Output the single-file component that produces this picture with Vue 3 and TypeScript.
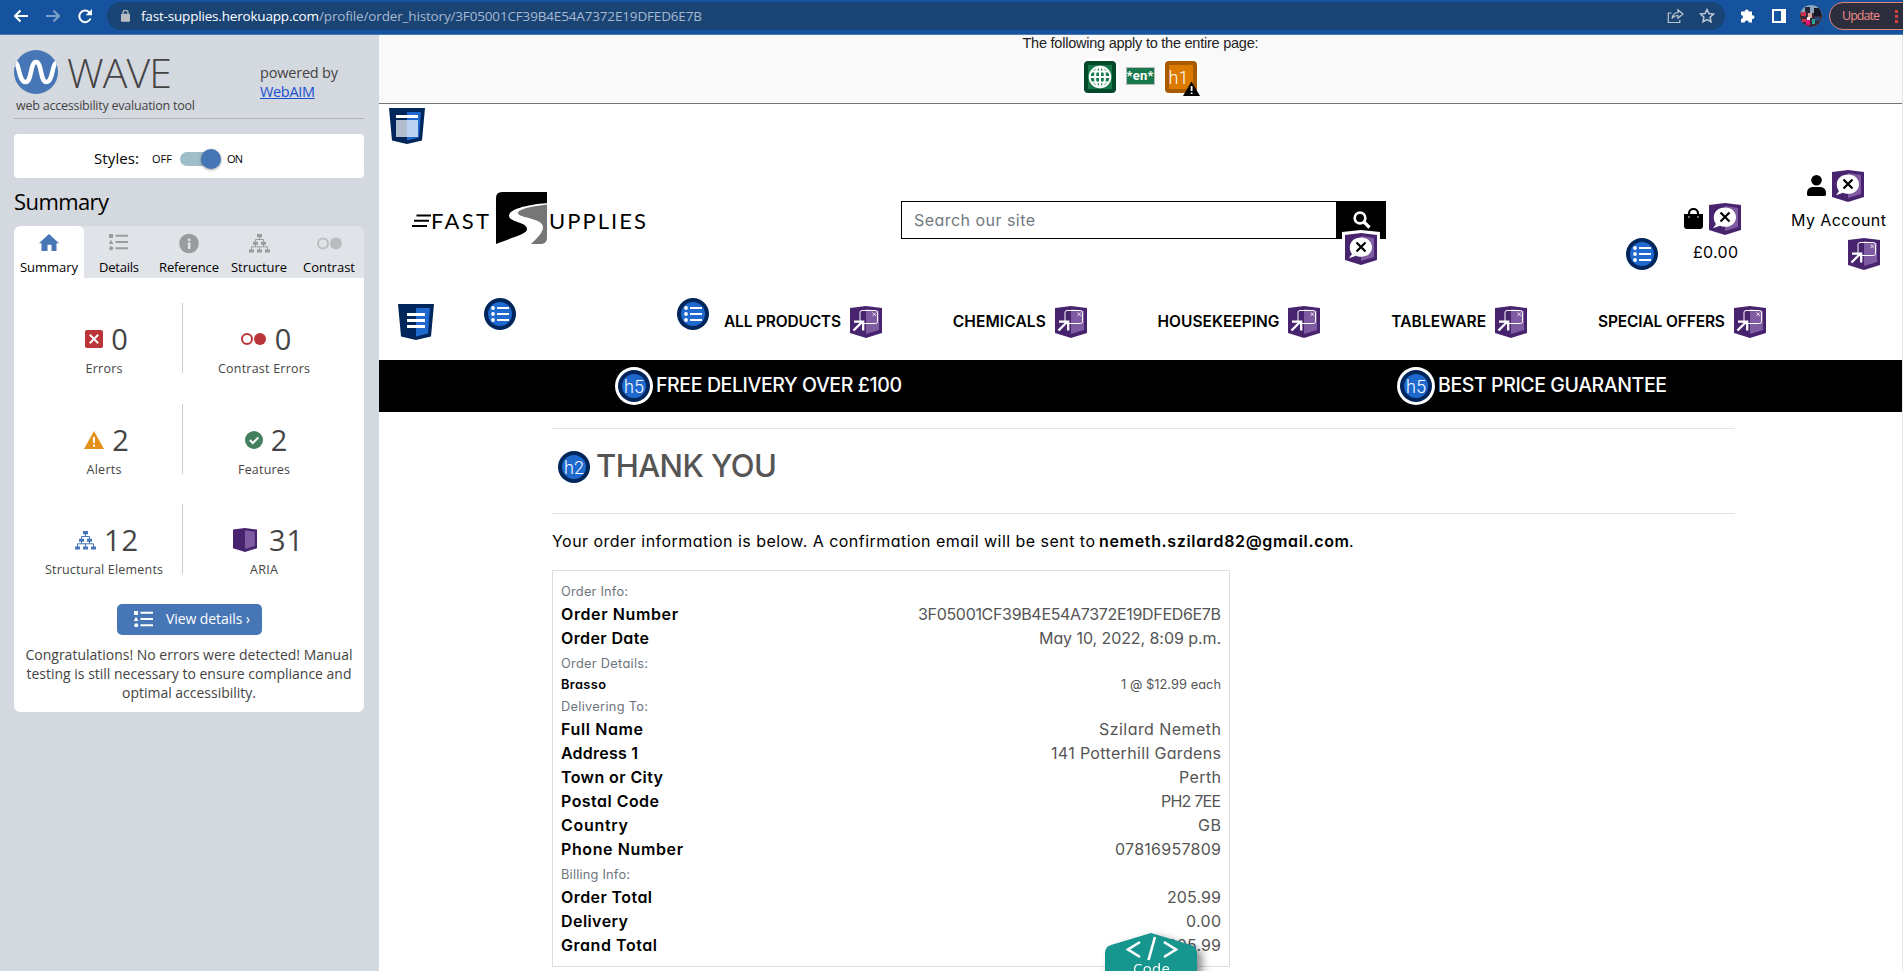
<script setup lang="ts">
interface Tab { label: string; icon: string; width: number; iconWidth: number; active?: boolean }
interface Stat { count: string; label: string; icon: string; iconWidth: number; gap: number; width: number; numWidth: number }
interface Row { kind: 'head' | 'row' | 'small'; label: string; width: number; value?: string; valueWidth?: number }

/* Spreads the letters of an element so that its text takes the given width. */
const vFit = {
  mounted(el: HTMLElement, binding: { value: number }) {
    const natural = el.getBoundingClientRect().width
    const gaps = Math.max((el.textContent ?? '').length - 1, 1)
    const spacing = (binding.value - natural) / gaps
    el.style.letterSpacing = `${spacing}px`
    el.style.marginRight = `${-spacing}px`
  },
}

const tabs: Tab[] = [
  { label: 'Summary', icon: 'home', width: 58, iconWidth: 20, active: true },
  { label: 'Details', icon: 'details', width: 40, iconWidth: 20 },
  { label: 'Reference', icon: 'info', width: 60, iconWidth: 20 },
  { label: 'Structure', icon: 'tree', width: 56, iconWidth: 21 },
  { label: 'Contrast', icon: 'contrast', width: 52, iconWidth: 25 },
]

const stats: Stat[][] = [
  [
    { count: '0', label: 'Errors', icon: 'error', iconWidth: 18, gap: 8, width: 37, numWidth: 17 },
    { count: '0', label: 'Contrast Errors', icon: 'contrast-red', iconWidth: 25, gap: 9, width: 92, numWidth: 17 },
  ],
  [
    { count: '2', label: 'Alerts', icon: 'alert', iconWidth: 20, gap: 8, width: 35, numWidth: 17 },
    { count: '2', label: 'Features', icon: 'check', iconWidth: 18, gap: 8, width: 52, numWidth: 17 },
  ],
  [
    { count: '12', label: 'Structural Elements', icon: 'tree', iconWidth: 21, gap: 8, width: 118, numWidth: 34 },
    { count: '31', label: 'ARIA', icon: 'cube', iconWidth: 24, gap: 12, width: 28, numWidth: 34 },
  ],
]

const nav = [
  { label: 'ALL PRODUCTS', width: 117 },
  { label: 'CHEMICALS', width: 93 },
  { label: 'HOUSEKEEPING', width: 122 },
  { label: 'TABLEWARE', width: 95 },
  { label: 'SPECIAL OFFERS', width: 127 },
]

const rows: Row[] = [
  { kind: 'head', label: 'Order Info:', width: 67 },
  { kind: 'row', label: 'Order Number', width: 117, value: '3F05001CF39B4E54A7372E19DFED6E7B', valueWidth: 303 },
  { kind: 'row', label: 'Order Date', width: 88, value: 'May 10, 2022, 8:09 p.m.', valueWidth: 182 },
  { kind: 'head', label: 'Order Details:', width: 87 },
  { kind: 'small', label: 'Brasso', width: 45, value: '1 @ $12.99 each', valueWidth: 100 },
  { kind: 'head', label: 'Delivering To:', width: 87 },
  { kind: 'row', label: 'Full Name', width: 82, value: 'Szilard Nemeth', valueWidth: 122 },
  { kind: 'row', label: 'Address 1', width: 77, value: '141 Potterhill Gardens', valueWidth: 170 },
  { kind: 'row', label: 'Town or City', width: 102, value: 'Perth', valueWidth: 42 },
  { kind: 'row', label: 'Postal Code', width: 98, value: 'PH2 7EE', valueWidth: 60 },
  { kind: 'row', label: 'Country', width: 67, value: 'GB', valueWidth: 23 },
  { kind: 'row', label: 'Phone Number', width: 122, value: '07816957809', valueWidth: 106 },
  { kind: 'head', label: 'Billing Info:', width: 69 },
  { kind: 'row', label: 'Order Total', width: 91, value: '205.99', valueWidth: 54 },
  { kind: 'row', label: 'Delivery', width: 67, value: '0.00', valueWidth: 35 },
  { kind: 'row', label: 'Grand Total', width: 96, value: '205.99', valueWidth: 54 },
]
</script>

<template>
  <div class="window">
    <svg class="defs" width="0" height="0" aria-hidden="true">
      <symbol id="cube" viewBox="0 0 32 32" preserveAspectRatio="none">
        <path d="M0 2 16 0 32 2V27L16 32 0 27Z" fill="#48246f" />
        <path d="M16 3 29 5V24L16 28Z" fill="#7f5ca1" />
      </symbol>
      <symbol id="label-x" viewBox="0 0 32 32">
        <use href="#cube" width="32" height="32" />
        <path d="M16 4.500c6.400 0 11 4 11 9.700s-4.600 9.600-11 9.600c-2 0-3.500-.3-5-1L4 25.200l3-4.200c-1.500-1.700-2.200-4-2.200-6.500C4.800 8.500 9.600 4.500 16 4.500Z" fill="#fff" />
        <path d="m11.500 9.500 9 9m0-9-9 9" stroke="#000" stroke-width="2.200" />
      </symbol>
      <symbol id="popup" viewBox="0 0 32 32">
        <use href="#cube" width="32" height="32" />
        <rect x="10" y="4.500" width="17.500" height="13" rx="2" fill="none" stroke="#fff" stroke-width="1" />
        <path d="m22.500 6.500 3.500 3.500m0-3.500-3.500 3.500" stroke="#fff" stroke-width=".8" />
        <path d="M3.500 24.500 12.500 15.500M4 15.700h9.200v8.800" fill="none" stroke="#fff" stroke-width="2.300" />
      </symbol>
      <symbol id="list" viewBox="0 0 32 32">
        <circle cx="16" cy="16" r="16" fill="#00265b" /><circle cx="16" cy="16" r="12" fill="#1f69ce" />
        <path d="M13 10h12M13 16h12M13 22h12" stroke="#fff" stroke-width="2" />
        <circle cx="9" cy="10" r="1.900" fill="#fff" /><circle cx="9" cy="16" r="1.900" fill="#fff" /><circle cx="9" cy="22" r="1.900" fill="#fff" />
      </symbol>
      <symbol id="disc" viewBox="0 0 32 32">
        <circle cx="16" cy="16" r="16" fill="#00265b" /><circle cx="16" cy="16" r="12" fill="#1f69ce" />
      </symbol>
      <symbol id="shield" viewBox="0 0 36 36">
        <path d="M0 0H36L33 32.500 18 36 3 32.500Z" fill="#00265b" />
        <path d="M18 4H32L30 29.500 18 32.500Z" fill="#1f69ce" />
      </symbol>
      <symbol id="home" viewBox="0 0 20 20"><path d="M10 1 20 10.200h-2.500V18h-5v-6.200h-4V18h-6v-7.800H0Z" fill="currentColor" /></symbol>
      <symbol id="details" viewBox="0 0 20 20">
        <path d="M0 1h4v4H0ZM6.500 1.800H19v2H6.500ZM2 6.800 4.400 11H-.3ZM6.500 8H19v2H6.500ZM6.500 14.200H19v2H6.500Z" fill="currentColor" />
        <circle cx="2.200" cy="15.200" r="2" fill="currentColor" />
      </symbol>
      <symbol id="info" viewBox="0 0 20 20"><circle cx="10" cy="10.500" r="9.800" fill="currentColor" /><path d="M8.900 9.200h2.500V16H8.900ZM8.900 5.500h2.500V8H8.900Z" fill="#e0e3e8" /></symbol>
      <symbol id="tree" viewBox="0 0 21 20">
        <path d="M8 1h5v3.300H8ZM4 8.800h5v3H4ZM12 8.800h5v3h-5ZM0 16.500h5v3H0ZM8 16.500h5v3H8ZM16 16.500h5v3h-5Z" fill="currentColor" />
        <path d="M10.500 4v2.500M6.500 9V6.500h8V9M6.500 11v2.800M14.500 11v2.800M2.500 17v-3.200h16V17M10.500 17v-3.200" fill="none" stroke="currentColor" stroke-width="1" />
      </symbol>
      <symbol id="contrast" viewBox="0 0 25 20">
        <circle cx="6" cy="10.500" r="5" fill="none" stroke="#babdc1" stroke-width="2" /><circle cx="19" cy="10.500" r="6" fill="#b9bcc0" />
      </symbol>
      <symbol id="contrast-red" viewBox="0 0 25 20">
        <circle cx="6" cy="10" r="5" fill="none" stroke="#bb3438" stroke-width="2" /><circle cx="19" cy="10" r="6" fill="#bb3438" />
      </symbol>
      <symbol id="error" viewBox="0 0 18 20"><rect y="1" width="18" height="18" rx="2" fill="#bb3438" /><path d="m4.800 5.800 8.400 8.400m0-8.400-8.400 8.400" stroke="#fff" stroke-width="2" /></symbol>
      <symbol id="alert" viewBox="0 0 20 20"><path d="M10 1 20 19H0Z" fill="#e4901b" /><path d="M9 7h2v6H9ZM9 14.500h2v2.200H9Z" fill="#fff" /></symbol>
      <symbol id="check" viewBox="0 0 18 20"><circle cx="9" cy="10" r="9" fill="#43805e" /><path d="m4.800 10 3 3 5.500-5.500" fill="none" stroke="#fff" stroke-width="2" /></symbol>
    </svg>

    <header class="chrome">
      <svg class="navs" width="94" height="34" viewBox="0 0 94 34" fill="none" stroke-width="2">
        <path d="M28 16H15M20.500 10.500 15 16l5.500 5.500" stroke="#fff" />
        <path d="M46 16H59M53.500 10.500 59 16l-5.500 5.500" stroke="#7d9fc9" />
        <path d="M90.500 18.500a5.800 5.800 0 1 1-1.300-6.300" stroke="#fff" /><path d="M92 9v6.300h-6.300Z" fill="#fff" />
      </svg>
      <div class="address">
        <svg class="lock" width="9" height="14" viewBox="0 0 10 14"><rect y="4.500" width="10" height="9" rx="1" fill="#b9bdc1" /><path d="M2.200 5V3.500a2.800 2.800 0 0 1 5.600 0V5" fill="none" stroke="#b9bdc1" stroke-width="1.300" /></svg>
        <span v-fit="178" class="host">fast-supplies.herokuapp.com</span><span v-fit="383" class="path">/profile/order_history/3F05001CF39B4E54A7372E19DFED6E7B</span>
        <svg class="page-tools" width="48" height="18" viewBox="0 0 48 18" fill="none" stroke="#bfc8d2" stroke-width="1.200">
          <path d="M4.500 6H1.300v9.500h11.500V13M5 11.500c.5-4 2.500-5.700 6-6V2.700l5 4.300-5 4.300V8.500c-2.500 0-4.500.8-6 3Z" />
          <path d="m40 2.500 1.900 4.100 4.500.5-3.300 3.100.9 4.500-4-2.200-4 2.200.9-4.500-3.300-3.100 4.500-.5Z" stroke-width="1.500" />
        </svg>
      </div>
      <svg class="puzzle" width="15" height="15" viewBox="0 0 15 15"><path d="M1 3.500h3.700a2 2 0 1 1 4 0H12v3.700h.6a1.900 1.900 0 0 1 0 3.800H12v3.500H8.700a2 2 0 0 0-4 0H1V11a2 2 0 0 0 0-4Z" fill="#fff" /></svg>
      <svg class="panel" width="14" height="14"><path d="M0 0h14v14H0ZM2 2v10h7V2Z" fill="#fff" fill-rule="evenodd" /></svg>
      <svg class="avatar" width="22" height="22" viewBox="0 0 22 22">
        <clipPath id="round"><circle cx="11" cy="11" r="11" /></clipPath>
        <g clip-path="url(#round)"><path d="M0 0h22v22H0Z" fill="#8ba6bd" /><path d="M0 8h22v14H0Z" fill="#3b2738" /><path d="M5 2h5v6H5Z" fill="#25253a" /><path d="M14 3h7v8h-7Z" fill="#171826" /><path d="M1 7h5v4H1ZM2 14h5v3H2Z" fill="#c9344d" /><path d="M6 15h4v5H6Z" fill="#e5127b" /><path d="M8 8h4v5H8Z" fill="#d4a596" /><path d="M12 14h3v5h-3Z" fill="#2aa39b" /><path d="M15 12h5v4h-5Z" fill="#2a4674" /><path d="M7 12h3v3H7Z" fill="#eee" /></g>
      </svg>
      <div class="update"><span v-fit="38">Update</span><i class="dots"></i></div>
    </header>

    <aside class="sidebar">
      <div class="brand">
        <div class="brand-name">
          <svg width="44" height="44" viewBox="0 0 44 44"><circle cx="22" cy="22" r="22" fill="#4776b7" /><path d="M2 13C5 14 5 32 11.500 32S16 12 22 12s4 20 10.500 20S38 14 42 13" fill="none" stroke="#fff" stroke-width="4.500" /></svg>
          <span v-fit="105" class="wave">WAVE</span>
        </div>
        <div class="powered"><span v-fit="78">powered by</span><br><a v-fit="55">WebAIM</a></div>
        <div class="tagline"><span v-fit="179">web accessibility evaluation tool</span></div>
      </div>
      <div class="styles">
        <span v-fit="45" class="styles-label">Styles:</span><span v-fit="20">OFF</span>
        <span class="switch"><i></i></span><span v-fit="16">ON</span>
      </div>
      <h2><span v-fit="95">Summary</span></h2>
      <div class="tabs">
        <div v-for="tab in tabs" :key="tab.label" :class="['tab', { active: tab.active }]">
          <svg :width="tab.iconWidth" height="20"><use :href="'#' + tab.icon" /></svg>
          <span v-fit="tab.width">{{ tab.label }}</span>
        </div>
      </div>
      <section class="card">
        <div v-for="(pair, i) in stats" :key="i" class="pair">
          <div v-for="stat in pair" :key="stat.label" class="stat">
            <div class="count">
              <svg :class="stat.icon" :width="stat.iconWidth" :height="stat.icon === 'cube' ? 24 : 20" :style="{ marginRight: stat.gap + 'px' }"><use :href="'#' + stat.icon" /></svg>
              <span v-fit="stat.numWidth">{{ stat.count }}</span>
            </div>
            <span v-fit="stat.width" class="stat-label">{{ stat.label }}</span>
          </div>
        </div>
        <button class="view"><svg width="20" height="20"><use href="#details" /></svg><span v-fit="84">View details ›</span></button>
        <p><span v-fit="327">Congratulations! No errors were detected! Manual</span><br><span v-fit="325">testing is still necessary to ensure compliance and</span><br><span v-fit="134">optimal accessibility.</span></p>
      </section>
    </aside>

    <main class="page">
      <div class="notice">
        <span v-fit="236">The following apply to the entire page:</span>
        <div class="notice-icons">
          <svg width="38" height="38" viewBox="-3 -3 38 38">
            <rect x="-3" y="-3" width="38" height="38" rx="7" fill="#fff" /><rect width="32" height="32" rx="4" fill="#00492a" /><path d="M4 4h24v24H4Z" fill="#17794b" />
            <g fill="none" stroke="#fff" stroke-width="2"><circle cx="16" cy="16" r="10.300" /><ellipse cx="16" cy="16" rx="5" ry="10.300" /><path d="M16 6v20M6 16h20M8 10.500h16M8 21.500h16" /></g>
          </svg>
          <span class="lang"><b v-fit="27">*en*</b></span>
          <svg width="38" height="38" viewBox="-3 -3 38 38">
            <rect x="-3" y="-3" width="38" height="38" rx="7" fill="#fff" /><rect width="32" height="32" rx="4" fill="#a95b00" /><path d="M4 4h24v24H4Z" fill="#dc7a00" />
            <text x="13.500" y="23" text-anchor="middle" class="mark" fill="#fff">h1</text>
            <path d="M26.500 20.500 35 35H18Z" fill="#000" /><path d="M25.700 25h1.800v5h-1.800ZM25.700 31.500h1.800V33h-1.800Z" fill="#fff" />
          </svg>
        </div>
      </div>

      <div class="masthead">
        <svg class="banner-mark" width="36" height="36" viewBox="0 0 36 36"><use href="#shield" width="36" height="36" /><path d="M7 7h22v3H7Z" fill="#fff" /><path d="M7 12h11v17H7Z" fill="#b2bdcd" /><path d="M18 12h11v17H18Z" fill="#bbd2f1" /></svg>
        <div class="logo">
          <svg width="20" height="14" viewBox="0 0 20 14"><path d="M5.500 1.500H20M3 6.700h15M1 12h15" stroke="#000" stroke-width="1.900" /></svg>
          <span v-fit="58">FAST</span>
          <svg class="road" width="51" height="52" viewBox="0 0 51 52">
            <path d="M6 0H51V11C30 13 13 17 13 24c0 6 18 6 18 13C31 42 20 44 0 52V6Q0 0 6 0Z" />
            <path d="M51 12.500C38 14 22 17 22 21c0 5 25 5 25 14 0 6-6 11-12 17H46q5-1 5-6Z" fill="#767676" />
          </svg>
          <span v-fit="97">UPPLIES</span>
        </div>
        <div class="search">
          <div class="field"><span v-fit="121">Search our site</span></div>
          <div class="go"><svg width="18" height="18" viewBox="0 0 18 18" fill="none" stroke="#fff"><circle cx="7" cy="7" r="5.300" stroke-width="2.700" /><path d="m11 11 5.500 5.500" stroke-width="3.200" /></svg>
            <svg class="go-mark" width="38" height="38" viewBox="-3 -3 38 38"><path d="M-3-1 16-3 35-1V29L16 35-3 29Z" fill="#fff" /><use href="#label-x" width="32" height="32" /></svg>
          </div>
        </div>
        <svg class="account-list" width="32" height="32"><use href="#list" /></svg>
        <div class="bag">
          <div class="duo"><svg width="19" height="21" viewBox="0 0 19 21"><path d="M0 6h19v12q0 3-3 3H3q-3 0-3-3Z" /><path d="M5 9V5.500a4.500 4.500 0 0 1 9 0V9" fill="none" stroke="#000" stroke-width="2.200" /><circle cx="5" cy="9" r=".8" fill="#fff" /><circle cx="14" cy="9" r=".8" fill="#fff" /></svg><svg width="32" height="32"><use href="#label-x" /></svg></div>
          <span v-fit="45">£0.00</span>
        </div>
        <div class="account">
          <div class="duo"><svg width="19" height="21" viewBox="0 0 19 21"><circle cx="9.500" cy="5.300" r="5.300" /><path d="M5 12h9q5 1 5 6v1.500q0 1.500-2 1.500H2q-2 0-2-1.500V18q0-5 5-6Z" /></svg><svg width="32" height="32"><use href="#label-x" /></svg></div>
          <span v-fit="95">My Account</span>
          <svg class="account-popup" width="32" height="32"><use href="#popup" /></svg>
        </div>
      </div>

      <nav class="nav">
        <svg class="nav-mark" width="36" height="36" viewBox="0 0 36 36"><use href="#shield" width="36" height="36" /><path d="M9 9h18v3H9ZM9 15h18v3H9ZM9 21h18v3H9Z" fill="#fff" /></svg>
        <svg class="list-a" width="32" height="32"><use href="#list" /></svg>
        <svg class="list-b" width="32" height="32"><use href="#list" /></svg>
        <div class="links">
          <a v-for="item in nav" :key="item.label"><span v-fit="item.width">{{ item.label }}</span><svg width="32" height="32"><use href="#popup" /></svg></a>
        </div>
      </nav>

      <div class="strip">
        <div class="promo first"><svg width="38" height="38" viewBox="-3 -3 38 38"><circle cx="16" cy="16" r="19" fill="#fff" /><use href="#disc" width="32" height="32" /><text x="16" y="22.500" text-anchor="middle" class="mark" fill="#fff">h5</text></svg><span v-fit="246">FREE DELIVERY OVER £100</span></div>
        <div class="promo second"><svg width="38" height="38" viewBox="-3 -3 38 38"><circle cx="16" cy="16" r="19" fill="#fff" /><use href="#disc" width="32" height="32" /><text x="16" y="22.500" text-anchor="middle" class="mark" fill="#fff">h5</text></svg><span v-fit="229">BEST PRICE GUARANTEE</span></div>
      </div>

      <div class="content">
        <div class="thanks">
          <svg width="32" height="32" viewBox="0 0 32 32"><use href="#disc" width="32" height="32" /><text x="16" y="22.500" text-anchor="middle" class="mark" fill="#fff">h2</text></svg>
          <span v-fit="181">THANK YOU</span>
        </div>
        <div class="intro"><span v-fit="543">Your order information is below. A confirmation email will be sent to</span><b v-fit="250">nemeth.szilard82@gmail.com</b>.</div>
        <div class="order">
          <div v-for="row in rows" :key="row.label" :class="['line', row.kind]">
            <span v-fit="row.width" class="key">{{ row.label }}</span>
            <span v-if="row.value" v-fit="row.valueWidth" class="value">{{ row.value }}</span>
          </div>
        </div>
      </div>

      <div class="code">
        <svg width="92" height="70" viewBox="0 0 92 70"><path d="M46 0 86 12q6 2 6 8V70H0V20q0-6 6-8Z" fill="#17968f" /><path d="M35 9 23 16.500l12 7.500M59 9l12 7.500-12 7.500M50 4l-6.500 23" fill="none" stroke="#fff" stroke-width="2.600" /></svg>
        <span v-fit="37">Code</span>
      </div>
    </main>
  </div>
</template>

<style>
body { margin: 0; overflow: hidden; }
</style>

<style scoped>
.window { width: 1903px; height: 971px; overflow: hidden; display: grid; grid-template: 35px 936px / 379px 1524px; font-family: "Open Sans", "Noto Sans", sans-serif; color: #000; }
.defs { position: absolute; }
svg { display: block; flex: none; }
span, a, b { display: inline-block; white-space: nowrap; }
.mark { font: 300 18px Roboto, "Liberation Sans", sans-serif; }

.chrome { grid-column: 1 / 3; box-sizing: border-box; height: 35px; background: #15539e; border-bottom: 1px solid #4a7ab3; display: flex; align-items: flex-start; overflow: hidden; }
.address { box-sizing: border-box; flex: none; width: 1618px; height: 28px; margin: 2px 0 0 13px; padding: 0 17px 0 14px; border-radius: 14px; background: #1a4474; display: flex; align-items: center; font-size: 13.500px; line-height: 28px; }
.lock { margin: -1px 11px 0 0; }
.host { color: #fff; }
.path { color: #a6b9d1; }
.page-tools { margin-left: auto; margin-right: -7px; }
.puzzle { margin: 8px 0 0 15px; }
.panel { margin: 9px 0 0 17px; }
.avatar { margin: 5px 0 0 14px; }
.update { box-sizing: border-box; width: 100px; height: 28px; flex: none; margin: 2px 0 0 7px; padding-left: 12px; border: 1px solid #e9847f; border-radius: 14px; background: #2c2d3d; color: #ef8b84; font-size: 12.500px; line-height: 26px; display: flex; }
.dots { width: 3px; height: 3px; margin: 7px 0 0 15px; background: #e0403a; box-shadow: 0 5px #e0403a, 0 10px #e0403a; }

.sidebar { background: #d4d8df; padding: 15px 15px 0 14px; }
.brand { height: 68px; display: grid; grid-template: 44px 24px / 246px 104px; border-bottom: 1px solid #b1b5b8; color: #444; }
.brand-name { display: flex; gap: 9px; }
.wave { height: 44px; font-size: 41px; font-weight: 300; line-height: 45px; }
.powered { font-size: 14.500px; line-height: 19px; padding-top: 13px; height: 40px; }
.powered a { color: #1a4fcf; text-decoration: underline; }
.tagline { font-size: 12.500px; line-height: 24px; padding-left: 2px; }
.styles { box-sizing: border-box; height: 44px; margin-top: 15px; padding: 5px 0 0 80px; border-radius: 4px; background: #fff; display: flex; align-items: center; font-size: 11px; }
.styles-label { font-size: 15px; line-height: 20px; margin-top: -2px; }
.switch { width: 35px; height: 14px; margin: 0 13px 0 8px; border-radius: 7px; background: #9ebfca; position: relative; }
.styles-label + span { position: relative; left: 13px; }
.styles-label + span + .switch { margin-left: 21px; }
.switch i { position: absolute; right: -6px; top: -3px; width: 20px; height: 20px; border-radius: 50%; background: #4776b7; box-shadow: 0 1px 3px #0006; }
.switch + span { margin-left: -1px; }
h2 { margin: 9px 0 10px; height: 29px; font-size: 22px; font-weight: 400; line-height: 29px; }
.tabs { height: 52px; border-radius: 6px 6px 0 0; background: #e0e3e8; display: grid; grid-template-columns: repeat(5, 70px); overflow: hidden; }
.tab { display: flex; flex-direction: column; align-items: center; padding-top: 7px; font-size: 13px; line-height: 17px; border-radius: 6px 6px 0 0; }
.tab svg { color: #999c9f; margin-bottom: 6px; }
.tab.active { background: #fff; }
.tab.active svg { color: #4776b7; }
.card { box-sizing: border-box; height: 434px; padding-top: 25px; border-radius: 0 0 6px 6px; background: #fff; color: #444; }
.pair { display: grid; grid-template-columns: 169px 181px; height: 70px; margin-bottom: 30.500px; }
.stat { box-sizing: border-box; height: 70px; display: flex; flex-direction: column; align-items: center; }
.stat:first-child { border-right: 1px solid #ccc; padding-left: 12px; }
.stat:last-child { padding-right: 19px; }
.count { display: flex; align-items: center; height: 40px; margin-top: 16px; font-size: 29px; line-height: 40px; }
.stat:first-child .count { padding-left: 5px; }
.stat:last-child .count { padding-left: 4px; }
.stat:last-child .cube { margin-left: 4px; }
.count .tree { color: #4776b7; }
.stat-label { font-size: 12.500px; line-height: 17px; margin-top: 1px; }
.view { box-sizing: border-box; width: 145px; height: 31px; margin: -1px 0 0 103px; padding: 0 0 0 17px; border: 0; border-radius: 5px; background: #4776b7; color: #fff; font: 14px "Open Sans", sans-serif; display: flex; align-items: center; }
.view svg { margin: 2px 12px 0 0; overflow: visible; }
.view span { margin-top: -1px; }
.card p { margin: 10px 0 0; text-align: center; font-size: 14px; line-height: 19px; }

.page { position: relative; box-sizing: border-box; width: 1524px; height: 936px; overflow: hidden; border-right: 1px solid #e4e4e4; background: #fff; font-family: Inter, "Open Sans", sans-serif; font-feature-settings: "cv11"; font-size: 16px; }
.notice { box-sizing: border-box; height: 69px; background: #f9f9f9; border-bottom: 1px solid #6f776f; display: flex; flex-direction: column; align-items: center; font: 14.500px/17px "Liberation Sans", Arial, sans-serif; color: #222; }
.notice-icons { display: flex; align-items: flex-start; margin: 6px 1px 0 0; }
.lang { box-sizing: border-box; width: 29px; height: 18px; margin: 9px 7px 0; border: 1px solid #bbb; background: #17794b; color: #fff; font: 13px/15px Roboto, sans-serif; text-align: center; }
.masthead { position: relative; height: 183px; }
.banner-mark { position: absolute; left: 10px; top: 4px; }
.logo { position: absolute; left: 32px; top: 87px; height: 52px; display: flex; align-items: center; font: 22px/52px Lato, sans-serif; }
.logo > svg:first-child { margin: 8px 0 0; }
.logo span { padding-top: 7px; line-height: 44px; }
.road { margin: 1px 2px 0 7px; }
.search { position: absolute; left: 522px; top: 97px; width: 485px; height: 38px; display: flex; }
.field { box-sizing: border-box; flex: 1; border: 1px solid #000; padding-left: 12px; line-height: 37px; color: #70797f; }
.go { position: relative; width: 49px; background: #000; }
.go > svg:first-child { margin: 10px 0 0 16px; }
.go-mark { position: absolute; left: 5px; top: 29px; }
.account-list { position: absolute; left: 1247px; top: 134px; }
.bag { position: absolute; left: 1305px; top: 99px; text-align: right; }
.account { position: absolute; left: 1412px; top: 66px; text-align: right; }
.duo { display: flex; gap: 6px; align-items: center; margin-bottom: 7px; }
.duo svg:first-child { margin-top: -1px; }
.bag > span { position: relative; left: -3px; }
.bag, .account { line-height: 20px; }
.account .duo { padding-left: 16px; margin-bottom: 8px; }
.account-popup { margin: 8px 0 0 57px; }
.nav { position: relative; height: 73px; }
.nav-mark { position: absolute; left: 19px; top: 17px; }
.list-a { position: absolute; left: 105px; top: 11px; }
.list-b { position: absolute; left: 298px; top: 11px; }
.links { display: flex; justify-content: space-between; width: 1042px; margin-left: 345px; padding-top: 19px; font-size: 15.500px; font-weight: 600; }
.links a { display: flex; align-items: center; gap: 9px; }
.links span { margin-top: -2px; }
.strip { height: 52px; background: #000; color: #fff; font-size: 19.500px; font-weight: 500; display: flex; align-items: center; }
.promo { display: flex; align-items: center; gap: 3px; width: 782px; line-height: 50px; }
.promo span { margin-top: -2px; }
.promo.first { margin-left: 236px; }
.promo.second { width: auto; }
.content { width: 1183px; margin: 16px 0 0 173px; }
.thanks { height: 84px; border: solid #e3e3e3; border-width: 1px 0; display: flex; gap: 6px; padding-left: 6px; color: #555; font-size: 31px; font-weight: 500; line-height: 73px; }
.thanks svg { margin-top: 22px; }
.intro { height: 56px; line-height: 55px; }
.intro b { margin-left: 4px; font-weight: 600; }
.order { box-sizing: border-box; width: 678px; height: 397px; border: 1px solid #dbdee3; padding: 8px 8px 0 8px; }
.line { display: flex; justify-content: space-between; height: 24px; line-height: 23px; }
.key { font-weight: 600; }
.value { color: #555; }
.head .key { font-size: 12.800px; font-weight: 400; line-height: 25px; color: #6c757d; }
.small { height: 19px; line-height: 19px; font-size: 12.800px; }
.code { position: absolute; left: 726px; top: 898px; width: 92px; height: 70px; filter: drop-shadow(5px 4px 4px #0007); color: #fff; font: 15px/18px "Open Sans", sans-serif; }
.code span { position: absolute; left: 28px; top: 26px; }
</style>
